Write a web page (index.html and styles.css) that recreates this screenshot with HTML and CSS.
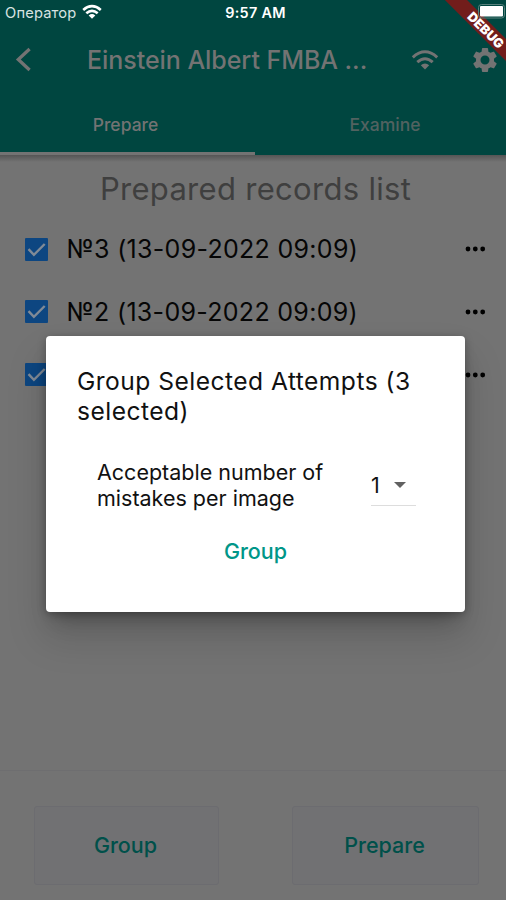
FILE: index.html
```html
<!DOCTYPE html>
<html lang="en">
<head>
<meta charset="utf-8">
<title>Prepared records</title>
<link rel="stylesheet" href="styles.css">
</head>
<body>
<div class="screen">
  <header class="appbar">
    <div class="status">
      <div class="carrier"><span>Оператор</span>
        <svg class="status-wifi" width="20" height="16" viewBox="0 0 20 16"><g fill="none" stroke="#fff" stroke-width="2.6"><path d="M1.2 5.9Q10-1.7 18.8 5.9"/><path d="M4.3 9.3Q10 4.4 15.7 9.3"/></g><path fill="#fff" d="M6.7 11.4Q10 8.7 13.3 11.4L10 14.8Z"/></svg>
      </div>
      <span class="clock">9:57 AM</span>
      <svg class="battery" width="28" height="16" viewBox="0 0 28 16"><rect x=".5" y=".5" width="26" height="13.5" rx="3" fill="none" stroke="#58817d"/><rect x="2" y="2" width="23" height="10.5" rx="1" fill="#fff"/></svg>
    </div>
    <div class="toolbar">
      <svg class="back" width="18" height="26" viewBox="0 0 18 26"><path d="M15.6 2 4.3 12.5l11.3 10.5" fill="none" stroke="#737373" stroke-width="3.3"/></svg>
      <h1>Einstein Albert FMBA ...</h1>
      <svg class="wifi" width="28" height="22" viewBox="0 0 28 22"><g fill="none" stroke="#737373" stroke-width="3"><path d="M1.8 8.3Q14-2.7 26.2 8.3"/><path d="M6.3 13.2Q14 6.3 21.7 13.2"/></g><path fill="#737373" d="M9.8 16.2Q14 13 18.2 16.2L14 20.5Z"/></svg>
      <svg class="gear" width="30" height="30" viewBox="0 0 24 24"><path fill="#737373" d="M19.14 12.94c.04-.3.06-.61.06-.94 0-.32-.02-.64-.07-.94l2.03-1.58c.18-.14.23-.41.12-.61l-1.92-3.32c-.12-.22-.37-.29-.59-.22l-2.39.96c-.5-.38-1.03-.7-1.62-.94l-.36-2.54c-.04-.24-.24-.41-.48-.41h-3.84c-.24 0-.43.17-.47.41l-.36 2.54c-.59.24-1.13.57-1.62.94l-2.39-.96c-.22-.08-.47 0-.59.22L2.74 8.87c-.12.21-.08.47.12.61l2.03 1.58c-.05.3-.09.63-.09.94s.02.64.07.94l-2.03 1.58c-.18.14-.23.41-.12.61l1.92 3.32c.12.22.37.29.59.22l2.39-.96c.5.38 1.03.7 1.62.94l.36 2.54c.05.24.24.41.48.41h3.84c.24 0 .44-.17.47-.41l.36-2.54c.59-.24 1.13-.56 1.62-.94l2.39.96c.22.08.47 0 .59-.22l1.92-3.32c.12-.22.07-.47-.12-.61zM12 15.6A3.6 3.6 0 1 1 12 8.4a3.6 3.6 0 0 1 0 7.2z"/></svg>
    </div>
    <nav class="tabs"><span class="tab active">Prepare</span><span class="tab">Examine</span></nav>
    <div class="debug">DEBUG</div>
  </header>
  <main>
    <h2>Prepared records list</h2>
    <ul class="records">
      <li><svg class="check" width="23" height="23" viewBox="0 0 23 23"><rect width="23" height="23" rx="1" fill="#0d4681"/><path d="m3.5 11.2 5.4 5.6L19.7 6" fill="none" stroke="#808a96" stroke-width="2.4"/></svg><span>№3 (13-09-2022 09:09)</span><svg class="more" width="21" height="6" viewBox="0 0 21 6"><circle cx="3" cy="3" r="2.4"/><circle cx="10.3" cy="3" r="2.4"/><circle cx="17.7" cy="3" r="2.4"/></svg></li>
      <li><svg class="check" width="23" height="23" viewBox="0 0 23 23"><rect width="23" height="23" rx="1" fill="#0d4681"/><path d="m3.5 11.2 5.4 5.6L19.7 6" fill="none" stroke="#808a96" stroke-width="2.4"/></svg><span>№2 (13-09-2022 09:09)</span><svg class="more" width="21" height="6" viewBox="0 0 21 6"><circle cx="3" cy="3" r="2.4"/><circle cx="10.3" cy="3" r="2.4"/><circle cx="17.7" cy="3" r="2.4"/></svg></li>
      <li><svg class="check" width="23" height="23" viewBox="0 0 23 23"><rect width="23" height="23" rx="1" fill="#0d4681"/><path d="m3.5 11.2 5.4 5.6L19.7 6" fill="none" stroke="#808a96" stroke-width="2.4"/></svg><svg class="more" width="21" height="6" viewBox="0 0 21 6"><circle cx="3" cy="3" r="2.4"/><circle cx="10.3" cy="3" r="2.4"/><circle cx="17.7" cy="3" r="2.4"/></svg></li>
    </ul>
  </main>
  <footer><div class="button">Group</div><div class="button">Prepare</div></footer>
  <section class="dialog" role="dialog">
    <h3>Group Selected Attempts (3<br>selected)</h3>
    <div class="field">
      <p>Acceptable number of<br>mistakes per image</p>
      <div class="select"><span>1</span><svg width="12" height="6" viewBox="0 0 12 6"><path fill="#616161" d="M0 0h12L6 6z"/></svg></div>
    </div>
    <div class="confirm">Group</div>
  </section>
</div>
</body>
</html>
```
FILE: styles.css
```css
* { box-sizing: border-box; }
body { margin: 0; font-family: Inter, "Noto Sans", sans-serif; }
h1, h2, h3, p, ul { margin: 0; padding: 0; font-weight: 400; }
svg { display: block; flex: none; }
.screen { position: relative; width: 506px; height: 900px; overflow: hidden; display: flex; flex-direction: column; background: #737373; color: #060606; white-space: nowrap; }
.appbar { position: relative; height: 155px; flex: none; overflow: hidden; background: #004640; }
.status { position: relative; z-index: 1; display: grid; grid-template-columns: 1fr auto 1fr; align-items: center; height: 26px; padding: 0 0 0 5px; color: #fff; font-size: 14.7px; }
.carrier { display: flex; align-items: center; gap: 6px; letter-spacing: .15px; color: #d8e3e2; }
.status-wifi { margin-top: -2px; }
.clock { margin-top: -2px; font-size: 14.4px; font-weight: 600; letter-spacing: .3px; }
.battery { justify-self: end; margin-top: -2px; }
.toolbar { display: flex; align-items: center; height: 68px; padding: 0 6px 0 14px; }
h1 { width: 281px; margin-left: 55px; font-size: 25px; font-weight: 500; letter-spacing: -.05px; color: #737373; }
.wifi { margin-left: 43px; }
.gear { margin-left: 31px; }
.tabs { display: flex; height: 61px; }
.tab { width: 251px; padding: 19px 0 0 9px; text-align: center; font-size: 17.5px; line-height: 24px; font-weight: 500; color: #526260; }
.tab.active { width: 255px; padding-left: 0; padding-right: 4px; color: #737373; border-bottom: 3px solid #737373; }
.debug { position: absolute; z-index: 2; top: 22px; right: -50px; width: 140px; height: 16px; transform: rotate(45deg); background: #721d1b; color: #fff; text-align: center; font-size: 13px; line-height: 16px; font-weight: 900; clip-path: inset(0); }
.status { z-index: 3; }
main { flex: 1; padding-top: 13px; background: linear-gradient(#555, #737373 7px); }
h2 { height: 49.8px; padding-left: 5px; text-align: center; font-size: 31px; line-height: 42px; letter-spacing: .3px; color: #3f3f3f; }
.records { list-style: none; }
.records li { display: flex; align-items: center; height: 62.7px; padding: 0 20px 0 25px; font-size: 25px; letter-spacing: .3px; }
.records span { margin-left: 18.5px; }
.more { margin-left: auto; }
footer { display: flex; justify-content: space-between; height: 130px; padding: 35px 27px 16px 34px; border-top: 1px solid #6e6e70; }
.button { width: 185px; height: 79px; border: 1px solid #6c6c70; background: #717173; border-radius: 3px; text-align: center; line-height: 77px; font-size: 21.5px; font-weight: 500; letter-spacing: 0; color: #00504a; padding-right: 2px; }
.button + .button { width: 187px; }
.dialog { position: absolute; left: 46px; top: 336px; width: 419px; height: 276px; padding: 29.5px 30px 0 31px; border-radius: 4px; background: #fff; color: #111; box-shadow: 0 14px 20px -8px #0004, 0 24px 38px 3px #0002, 0 2px 8px #0004; }
h3 { font-size: 24.6px; line-height: 30px; letter-spacing: .46px; }
.field { display: flex; justify-content: space-between; padding: 33px 19px 0 20px; font-size: 21.5px; line-height: 26px; letter-spacing: 0; }
.select { display: flex; align-items: center; justify-content: space-between; width: 45px; height: 40px; margin-top: 7px; padding-right: 10px; border-bottom: 1px solid #ddd; }
.confirm { margin-top: 25px; padding-right: 1px; text-align: center; font-size: 21.5px; line-height: 30px; font-weight: 500; color: #009688; }
```
